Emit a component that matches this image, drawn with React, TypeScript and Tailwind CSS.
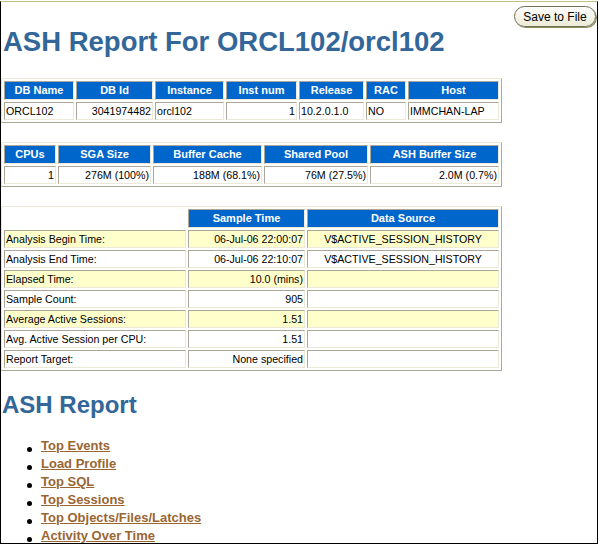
import React from "react";

const cellBorder =
  "border border-t-[#aca899] border-l-[#aca899] border-b-[#ece9d8] border-r-[#ece9d8]";
const outerBorder =
  "border border-t-[#ece9d8] border-l-[#ece9d8] border-b-[#aca899] border-r-[#aca899]";

function Th({ children }: { children?: React.ReactNode }) {
  return (
    <div
      className={`${cellBorder} h-[19px] bg-[#0066cc] text-white font-bold text-[11px] leading-[12px] pt-[2px] px-[2px] text-center whitespace-nowrap overflow-hidden`}
    >
      {children}
    </div>
  );
}

function Td({
  children,
  align = "left",
  yellow = false,
}: {
  children?: React.ReactNode;
  align?: "left" | "right" | "center";
  yellow?: boolean;
}) {
  const a =
    align === "right" ? "text-right" : align === "center" ? "text-center" : "text-left";
  const bg = yellow ? "bg-[#ffffcc]" : "bg-white";
  return (
    <div
      className={`${cellBorder} ${a} ${bg} h-[18px] text-[10.67px] leading-[12px] pt-[2px] px-[1px] text-black whitespace-nowrap overflow-hidden`}
    >
      {children}
    </div>
  );
}

const samples: { label: string; time: string; src: string; y: boolean }[] = [
  { label: "Analysis Begin Time:", time: "06-Jul-06 22:00:07", src: "V$ACTIVE_SESSION_HISTORY", y: true },
  { label: "Analysis End Time:", time: "06-Jul-06 22:10:07", src: "V$ACTIVE_SESSION_HISTORY", y: false },
  { label: "Elapsed Time:", time: "10.0 (mins)", src: "", y: true },
  { label: "Sample Count:", time: "905", src: "", y: false },
  { label: "Average Active Sessions:", time: "1.51", src: "", y: true },
  { label: "Avg. Active Session per CPU:", time: "1.51", src: "", y: false },
  { label: "Report Target:", time: "None specified", src: "", y: false },
];

const links = [
  "Top Events",
  "Load Profile",
  "Top SQL",
  "Top Sessions",
  "Top Objects/Files/Latches",
  "Activity Over Time",
];

export default function App() {
  return (
    <div className="w-[599px] h-[545px] bg-white pt-[1px] overflow-hidden font-['Liberation_Sans',Arial,sans-serif]">
      <div className="w-[598px] h-[543px] border-l border-r border-b border-black border-t border-t-[#c0c080] overflow-hidden">
        <div className="flex justify-end pt-[4px] pr-[1px]">
          <button className="w-[82px] h-[21px] rounded-full border border-[#6f6f55] bg-gradient-to-b from-white to-[#ecebd6] shadow-[1px_1px_0_#8c8c5c] text-[12px] leading-[12px] text-black">
            Save to File
          </button>
        </div>
        <h1 className="mt-[1px] pl-[2px] text-[27.5px] leading-[28px] font-bold text-[#336699]">
          ASH Report For ORCL102/orcl102
        </h1>

        <div
          className={`${outerBorder} mt-[22px] w-fit grid grid-cols-[70px_77px_69px_71px_65px_40px_91px] gap-[2px] p-[2px]`}
        >
          <Th>DB Name</Th>
          <Th>DB Id</Th>
          <Th>Instance</Th>
          <Th>Inst num</Th>
          <Th>Release</Th>
          <Th>RAC</Th>
          <Th>Host</Th>
          <Td>ORCL102</Td>
          <Td align="right">3041974482</Td>
          <Td>orcl102</Td>
          <Td align="right">1</Td>
          <Td>10.2.0.1.0</Td>
          <Td>NO</Td>
          <Td>IMMCHAN-LAP</Td>
        </div>

        <div
          className={`${outerBorder} mt-[19px] w-fit grid grid-cols-[52px_93px_109px_104px_129px] gap-[2px] p-[2px]`}
        >
          <Th>CPUs</Th>
          <Th>SGA Size</Th>
          <Th>Buffer Cache</Th>
          <Th>Shared Pool</Th>
          <Th>ASH Buffer Size</Th>
          <Td align="right">1</Td>
          <Td align="right">276M (100%)</Td>
          <Td align="right">188M (68.1%)</Td>
          <Td align="right">76M (27.5%)</Td>
          <Td align="right">2.0M (0.7%)</Td>
        </div>

        <div
          className={`${outerBorder} mt-[19px] w-fit grid grid-cols-[182px_117px_192px] gap-[2px] p-[2px]`}
        >
          <div className="h-[19px]" />
          <Th>Sample Time</Th>
          <Th>Data Source</Th>
          {samples.map((s) => (
            <React.Fragment key={s.label}>
              <Td yellow={s.y}>{s.label}</Td>
              <Td yellow={s.y} align="right">
                {s.time}
              </Td>
              <Td yellow={s.y} align="center">
                {s.src}
              </Td>
            </React.Fragment>
          ))}
        </div>

        <h2 className="mt-[22px] pl-[1px] text-[24px] leading-[24px] font-bold text-[#336699]">
          ASH Report
        </h2>

        <ul className="mt-[20px] pl-[26px]">
          {links.map((l) => (
            <li key={l} className="flex items-start h-[18px]">
              <span className="mt-[10px] w-[5px] h-[5px] rounded-full bg-black shrink-0" />
              <a
                href="#"
                className="ml-[9px] text-[13px] leading-[18px] font-bold text-[#996633] underline whitespace-nowrap"
              >
                {l}
              </a>
            </li>
          ))}
        </ul>
      </div>
    </div>
  );
}
